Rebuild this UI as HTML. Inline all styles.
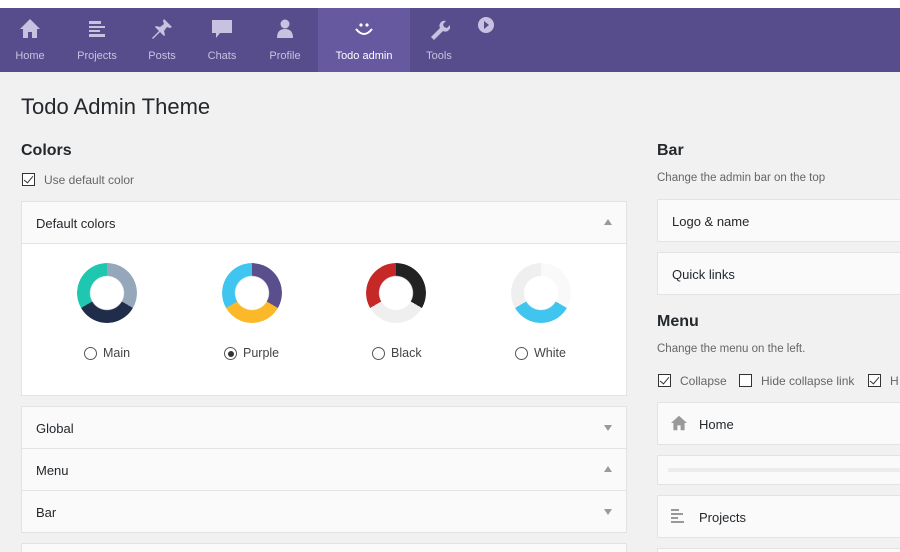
<!DOCTYPE html><html><head><style>
*{margin:0;padding:0;box-sizing:border-box}
html,body{width:900px;height:552px;overflow:hidden}
body{background:#f1f1f1;font-family:"Liberation Sans",sans-serif;position:relative;color:#23282d}
.a{position:absolute}
#bar{left:0;top:8px;width:900px;height:64px;background:#574d8c}
.ni{position:absolute;top:8px;height:64px;text-align:center;color:#c8c2e0;font-size:11px}
.ni span{position:absolute;left:0;right:0;top:42px}
.ni svg{position:absolute;top:10px;left:50%;margin-left:-11px}
.box{position:absolute;background:#fafafa;border:1px solid #e3e3e3}
.box .t{position:absolute;left:14px;font-size:13px;color:#23282d}
.arr{position:absolute;right:14px;width:0;height:0;border-left:4px solid transparent;border-right:4px solid transparent}
.up{border-bottom:6px solid #999}.dn{border-top:6px solid #999}
.d{position:absolute;width:60px;height:60px;border-radius:50%;-webkit-mask:radial-gradient(circle,transparent 16.5px,#000 17.5px);mask:radial-gradient(circle,transparent 16.5px,#000 17.5px)}
.rad{position:absolute;width:13px;height:13px;border:1px solid #555;border-radius:50%;background:#fff}
.lbl{position:absolute;font-size:12.5px;color:#444}
.cb{position:absolute;width:13px;height:13px;border:1px solid #333;background:#fff}
.cb.c::after{content:"";position:absolute;left:3px;top:0px;width:4px;height:8px;border:solid #333;border-width:0 1.5px 1.5px 0;transform:rotate(40deg)}
h2{position:absolute;font-size:16px;font-weight:bold;color:#23282d}
.sm{position:absolute;font-size:11.5px;color:#666}
</style></head><body>
<div class="a" style="left:0;top:0;width:900px;height:8px;background:#fff"></div>
<div class="a" id="bar"></div>
<div class="a" style="left:318px;top:8px;width:92px;height:64px;background:#66599f"></div>
<div class="ni" style="left:0;width:60px"><svg width="22" height="22" viewBox="0 0 22 22"><path d="M11 1L1 11h3v9h5v-6h4v6h5v-9h3z" fill="#c8c2e0"/></svg><span>Home</span></div>
<div class="ni" style="left:67px;width:60px"><svg width="22" height="22" viewBox="0 0 22 22"><g fill="#c8c2e0"><rect x="3" y="3" width="12" height="3"/><rect x="3" y="8" width="16" height="2"/><rect x="3" y="12" width="11" height="2"/><rect x="3" y="16" width="16" height="3"/></g></svg><span>Projects</span></div>
<div class="ni" style="left:132px;width:60px"><svg width="22" height="22" viewBox="0 0 22 22"><path d="M13 1l8 8-2 1-3-1-3 4 1 4-1 1-4-4-7 7-1-1 7-7-4-4 1-1 4 1 4-3-1-3z" fill="#c8c2e0"/></svg><span>Posts</span></div>
<div class="ni" style="left:192px;width:60px"><svg width="22" height="22" viewBox="0 0 22 22"><path d="M1 2h20v13H9l-4 5v-5H1z" fill="#c8c2e0"/></svg><span>Chats</span></div>
<div class="ni" style="left:255px;width:60px"><svg width="22" height="22" viewBox="0 0 22 22"><circle cx="11" cy="6" r="4.5" fill="#c8c2e0"/><path d="M3 20q0-9 8-9t8 9z" fill="#c8c2e0"/></svg><span>Profile</span></div>
<div class="ni" style="left:318px;width:92px;color:#fff"><svg width="22" height="22" viewBox="0 0 22 22"><circle cx="8" cy="7" r="1.6" fill="#fff"/><circle cx="14" cy="7" r="1.6" fill="#fff"/><path d="M3 11q8 10 16 0" stroke="#fff" stroke-width="2" fill="none"/></svg><span>Todo admin</span></div>
<div class="ni" style="left:409px;width:60px"><svg width="22" height="22" viewBox="0 0 22 22"><path d="M3 19l9-9a5 5 0 0 1 6-7l-3 3 1 3 3 1 3-3a5 5 0 0 1-7 6l-9 9z" fill="#c8c2e0"/></svg><span>Tools</span></div>
<svg class="a" style="left:477px;top:16px" width="18" height="18" viewBox="0 0 18 18"><circle cx="9" cy="9" r="8" fill="#c8c2e0"/><path d="M7 5l5 4-5 4z" fill="#574d8c"/></svg>

<div class="a" style="left:21px;top:94px;font-size:22px;color:#23282d">Todo Admin Theme</div>
<h2 style="left:21px;top:142px">Colors</h2>
<div class="cb c" style="left:22px;top:173px"></div><div class="sm" style="left:44px;top:173px;font-size:12px">Use default color</div>

<div class="box" style="left:21px;top:201px;width:606px;height:195px;background:#fff"></div>
<div class="box" style="left:21px;top:201px;width:606px;height:43px"><div class="t" style="top:14px">Default colors</div><div class="arr up" style="top:17px"></div></div>
<div class="d" style="left:77px;top:263px;background:conic-gradient(#94a7bb 0 120deg,#1f2d4a 120deg 240deg,#1fc6b0 240deg)"></div>
<div class="d" style="left:222px;top:263px;background:conic-gradient(#5a4e8c 0 120deg,#fbb829 120deg 240deg,#3fc5ef 240deg)"></div>
<div class="d" style="left:366px;top:263px;background:conic-gradient(#222 0 120deg,#efefef 120deg 240deg,#c62828 240deg)"></div>
<div class="d" style="left:511px;top:263px;background:conic-gradient(#f9f9f9 0 120deg,#40c5ef 120deg 240deg,#efefef 240deg)"></div>
<div class="rad" style="left:84px;top:347px"></div><div class="lbl" style="left:103px;top:346px">Main</div>
<div class="rad" style="left:224px;top:347px"><div style="position:absolute;left:2.5px;top:2.5px;width:6px;height:6px;border-radius:50%;background:#333"></div></div><div class="lbl" style="left:243px;top:346px">Purple</div>
<div class="rad" style="left:372px;top:347px"></div><div class="lbl" style="left:391px;top:346px">Black</div>
<div class="rad" style="left:515px;top:347px"></div><div class="lbl" style="left:534px;top:346px">White</div>

<div class="box" style="left:21px;top:406px;width:606px;height:43px"><div class="t" style="top:14px">Global</div><div class="arr dn" style="top:18px"></div></div>
<div class="box" style="left:21px;top:448px;width:606px;height:43px"><div class="t" style="top:14px">Menu</div><div class="arr up" style="top:17px"></div></div>
<div class="box" style="left:21px;top:490px;width:606px;height:43px"><div class="t" style="top:14px">Bar</div><div class="arr dn" style="top:18px"></div></div>
<div class="box" style="left:21px;top:543px;width:606px;height:9px;border-bottom:none"></div>

<h2 style="left:657px;top:142px">Bar</h2>
<div class="sm" style="left:657px;top:172px">Change the admin bar on the top</div>
<div class="box" style="left:657px;top:199px;width:260px;height:43px"><div class="t" style="top:14px">Logo &amp; name</div></div>
<div class="box" style="left:657px;top:252px;width:260px;height:43px"><div class="t" style="top:14px">Quick links</div></div>
<h2 style="left:657px;top:313px">Menu</h2>
<div class="sm" style="left:657px;top:343px">Change the menu on the left.</div>
<div class="cb c" style="left:658px;top:374px"></div><div class="sm" style="left:680px;top:374px;font-size:12px">Collapse</div>
<div class="cb" style="left:739px;top:374px"></div><div class="sm" style="left:761px;top:374px;font-size:12px">Hide collapse link</div>
<div class="cb c" style="left:868px;top:374px"></div><div class="sm" style="left:890px;top:374px;font-size:12px">H</div>
<div class="box" style="left:657px;top:402px;width:260px;height:43px"><svg class="a" style="left:12px;top:12px" width="18" height="16" viewBox="0 0 22 20"><path d="M11 1L1 10h3v9h5v-6h4v6h5v-9h3z" fill="#999"/></svg><div class="t" style="left:41px;top:14px">Home</div></div>
<div class="box" style="left:657px;top:455px;width:260px;height:30px"><div class="a" style="left:10px;top:12px;width:250px;height:4px;background:#ececec"></div></div>
<div class="box" style="left:657px;top:495px;width:260px;height:43px"><svg class="a" style="left:12px;top:12px" width="16" height="16" viewBox="0 0 16 16"><g fill="#999"><rect x="1" y="1" width="8" height="2"/><rect x="1" y="5" width="12" height="2"/><rect x="1" y="9" width="7" height="2"/><rect x="1" y="13" width="13" height="2"/></g></svg><div class="t" style="left:41px;top:14px">Projects</div></div>
<div class="box" style="left:657px;top:548px;width:260px;height:4px;border-bottom:none"></div>
</body></html>
